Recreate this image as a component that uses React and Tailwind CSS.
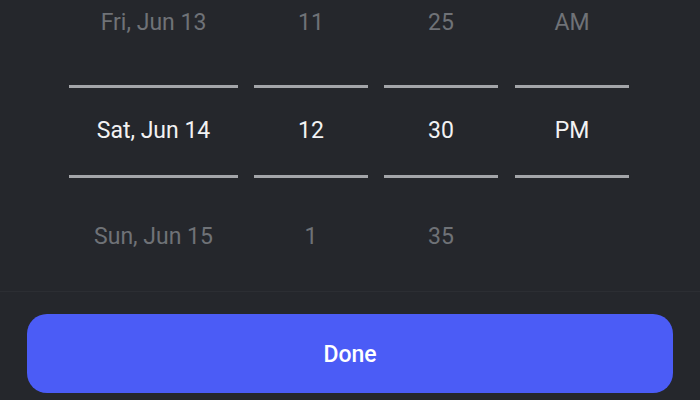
const columns = [
  { width: "w-[169px]", prev: "Fri, Jun 13", current: "Sat, Jun 14", next: "Sun, Jun 15" },
  { width: "w-[114px]", prev: "11", current: "12", next: "1" },
  { width: "w-[114px]", prev: "25", current: "30", next: "35" },
  { width: "w-[114px] ml-px", prev: "AM", current: "PM", next: "" },
];

function PickerColumn({ col }) {
  return (
    <div className={`${col.width} flex flex-col`}>
      <div className="h-[44px] pt-[1px] flex items-center justify-center text-[#6f7277]">
        {col.prev}
      </div>
      <div className="h-[3px] mt-[41px] bg-[#a3a5a9]" />
      <div className="h-[87px] pb-[3px] flex items-center justify-center text-[#f2f2f3]">
        {col.current}
      </div>
      <div className="h-[3px] bg-[#a3a5a9]" />
      <div className="h-[113px] pt-[4px] flex items-center justify-center text-[#6f7277]">
        {col.next}
      </div>
    </div>
  );
}

export default function App() {
  return (
    <div
      className="w-[700px] h-[400px] overflow-hidden bg-[#25272c] flex flex-col"
      style={{ fontFamily: "Roboto, 'Noto Sans', sans-serif" }}
    >
      {/* Wheel picker */}
      <div className="h-[291px] pl-[69px] flex gap-4 text-[23px] leading-none">
        {columns.map((col, i) => (
          <PickerColumn key={i} col={col} />
        ))}
      </div>

      {/* Footer */}
      <div className="border-t border-[#2c2e33] px-[27px] pt-[22px]">
        <button className="w-full h-[79px] pt-[3px] rounded-[20px] bg-[#4b5cf6] text-white text-[23px] font-medium">
          Done
        </button>
      </div>
    </div>
  );
}
